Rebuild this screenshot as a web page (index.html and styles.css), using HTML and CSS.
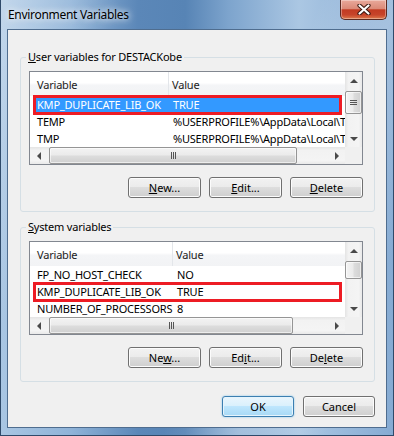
FILE: index.html
```html
<!DOCTYPE html>
<html lang="en">
<head>
  <meta charset="UTF-8" />
  <title>Environment Variables</title>
  <link rel="stylesheet" href="styles.css">
</head>
<body>
  <div class="window">
    <div class="titlebar">
      <span class="title">Environment Variables</span>
      <div class="close">
        <svg width="14" height="11" viewBox="0 0 14 11">
          <path d="M2.5 1.5 L11.5 9.5 M11.5 1.5 L2.5 9.5" stroke="#3b1810" stroke-width="4.2" stroke-linecap="round" fill="none"/>
          <path d="M2.5 1.5 L11.5 9.5 M11.5 1.5 L2.5 9.5" stroke="#fff" stroke-width="2.2" stroke-linecap="round" fill="none"/>
        </svg>
      </div>
    </div>

    <div class="client">
      <!-- user variables -->
      <fieldset class="group">
        <legend><u>U</u>ser variables for DESTACKobe</legend>
        <div class="list list-user">
          <div class="list-body">
            <div class="list-head cols"><span>Variable</span><span>Value</span></div>
            <div class="row cols mark sel"><span>KMP_DUPLICATE_LIB_OK</span><span>TRUE</span></div>
            <div class="row cols"><span>TEMP</span><span>%USERPROFILE%\AppData\Local\T</span></div>
            <div class="row cols"><span>TMP</span><span>%USERPROFILE%\AppData\Local\T</span></div>
          </div>
          <div class="vscroll">
            <div class="sb-btn"><i class="arr-up"></i></div>
            <div class="thumb-v thumb-user"><i class="grip-v"></i></div>
            <div class="sb-fill"></div>
            <div class="sb-btn"><i class="arr-down"></i></div>
          </div>
          <div class="hscroll">
            <div class="sb-btn-h"><i class="arr-left"></i></div>
            <div class="thumb-h" style="width: 248px"><i class="grip-h"></i></div>
            <div class="sb-fill"></div>
            <div class="sb-btn-h"><i class="arr-right"></i></div>
          </div>
          <div class="corner"></div>
        </div>
        <div class="btns">
          <button class="btn"><u>N</u>ew...</button>
          <button class="btn"><u>E</u>dit...</button>
          <button class="btn"><u>D</u>elete</button>
        </div>
      </fieldset>

      <!-- system variables -->
      <fieldset class="group">
        <legend><u>S</u>ystem variables</legend>
        <div class="list list-sys">
          <div class="list-body">
            <div class="list-head cols"><span>Variable</span><span>Value</span></div>
            <div class="row cols"><span>FP_NO_HOST_CHECK</span><span>NO</span></div>
            <div class="row cols mark"><span>KMP_DUPLICATE_LIB_OK</span><span>TRUE</span></div>
            <div class="row cols"><span>NUMBER_OF_PROCESSORS</span><span>8</span></div>
          </div>
          <div class="vscroll">
            <div class="sb-btn"><i class="arr-up"></i></div>
            <div class="thumb-v thumb-sys"></div>
            <div class="sb-fill"></div>
            <div class="sb-btn"><i class="arr-down"></i></div>
          </div>
          <div class="hscroll">
            <div class="sb-btn-h"><i class="arr-left"></i></div>
            <div class="thumb-h" style="width: 244px"><i class="grip-h"></i></div>
            <div class="sb-fill"></div>
            <div class="sb-btn-h"><i class="arr-right"></i></div>
          </div>
          <div class="corner"></div>
        </div>
        <div class="btns">
          <button class="btn">Ne<u>w</u>...</button>
          <button class="btn">Ed<u>i</u>t...</button>
          <button class="btn">De<u>l</u>ete</button>
        </div>
      </fieldset>

      <div class="dlg-btns">
        <button class="btn btn-ok">OK</button>
        <button class="btn">Cancel</button>
      </div>
    </div>
  </div>
</body>
</html>
```

FILE: styles.css
```css
* {
  box-sizing: border-box;
}
body {
  margin: 0;
  font-family: "Noto Sans", sans-serif;
  font-size: 11px;
  letter-spacing: -0.2px;
  color: #000;
  background: #6f94bb;
}
.window {
  width: 394px;
  height: 436px;
  border: 1px solid #2f4a6a;
  border-top: none;
  background:
    linear-gradient(110deg, rgba(255,255,255,0.3) 0%, rgba(255,255,255,0) 22%, rgba(255,255,255,0) 58%, rgba(255,255,255,0.25) 72%, rgba(255,255,255,0) 88%),
    linear-gradient(to right, #a9c6e3 0%, #8fb3d8 18%, #5b87b8 35%, #5784b5 47%, #7da4cd 58%, #abc7e3 76%, #86abd3 100%);
}
.titlebar {
  height: 29px;
  display: flex;
  justify-content: space-between;
  align-items: flex-start;
  padding: 0 6px 0 7px;
}
.title {
  padding-top: 7px;
  font-size: 12px;
  line-height: 16px;
  letter-spacing: -0.3px;
  text-shadow: 0 0 6px #fff, 0 0 10px rgba(255,255,255,0.8);
}
.close {
  width: 47px;
  height: 20px;
  display: flex;
  align-items: center;
  justify-content: center;
  border: 1px solid #5b2a22;
  border-top: none;
  border-radius: 0 0 5px 5px;
  background: linear-gradient(#e9a99b 0%, #db8a78 45%, #c23b22 52%, #c7442a 78%, #dd7a4c 100%);
  box-shadow: inset 0 0 0 1px rgba(255,255,255,0.35);
}
.client {
  margin: 0 6px;
  height: 399px;
  border: 1px solid #4f6d8f;
  background: #f0f0f0;
  padding-top: 20px;
}

/* group boxes */
.group {
  margin: 0 11px 0 12px;
  padding: 0 11px 13px 8px;
  border: 1px solid #d5dfe5;
  border-radius: 3px;
  min-width: 0;
}
.group + .group {
  margin-top: 8px;
}
.group legend {
  font-size: 11px;
  line-height: 14px;
  padding: 0 2px;
  margin-left: -3px;
}

/* list view */
.list {
  margin-top: 7px;
  height: 94px;
  border: 1px solid #828790;
  background: #fff;
  display: grid;
  grid-template-columns: 315px 17px;
  grid-template-rows: 75px 17px;
}
.list-body {
  overflow: hidden;
}
.list-user .cols {
  grid-template-columns: 139px 1fr;
}
.list-sys .cols {
  grid-template-columns: 143px 1fr;
}
.cols {
  display: grid;
  white-space: nowrap;
}
.list-head {
  height: 24px;
  background: linear-gradient(#fff 0%, #fff 45%, #f4f5f7 55%, #f2f3f5 100%);
}
.list-head span {
  display: flex;
  align-items: center;
  padding-left: 3px;
  color: #1b1b1b;
}
.list-head span:first-child {
  padding-left: 7px;
  border-right: 1px solid #e3e6ea;
}
.row {
  height: 17px;
  line-height: 17px;
}
.row span {
  position: relative;
  padding-left: 4px;
}
.row span:first-child {
  padding-left: 7px;
}
.mark {
  position: relative;
}
.mark::before {
  content: "";
  position: absolute;
  left: 3px;
  right: 3px;
  top: -1px;
  bottom: -2px;
  border: 3px solid #ed1c24;
}
.sel {
  color: #fff;
}
.sel::before {
  background: #3399ff;
}

/* scrollbars */
.vscroll {
  display: flex;
  flex-direction: column;
  background: linear-gradient(to right, #e4e4e4, #f2f2f2 20%, #f4f4f4 80%, #e9e9e9);
}
.hscroll {
  display: flex;
  background: linear-gradient(#e4e4e4, #f2f2f2 20%, #f4f4f4 80%, #e9e9e9);
}
.corner {
  background: #f0f0f0;
}
.sb-btn {
  height: 17px;
  flex: none;
  display: flex;
  align-items: center;
  justify-content: center;
}
.sb-btn-h {
  width: 17px;
  flex: none;
  display: flex;
  align-items: center;
  justify-content: center;
}
.sb-fill {
  flex: 1;
}
.arr-up,
.arr-down,
.arr-left,
.arr-right {
  width: 0;
  height: 0;
  border: 4px solid transparent;
}
.arr-up {
  border-top: none;
  border-bottom-color: #4a4a4a;
}
.arr-down {
  border-bottom: none;
  border-top-color: #4a4a4a;
}
.arr-left {
  border-left: none;
  border-right-color: #4a4a4a;
}
.arr-right {
  border-right: none;
  border-left-color: #4a4a4a;
}
.thumb-v {
  flex: none;
  margin-top: 2px;
  display: flex;
  border: 1px solid #959595;
  border-radius: 2px;
  background: linear-gradient(to right, #f3f3f3, #ebebeb 45%, #dcdcdc 55%, #d0d0d0);
  box-shadow: inset 0 0 0 1px rgba(255,255,255,0.6);
}
.thumb-user {
  height: 23px;
}
.thumb-sys {
  height: 18px;
}
.grip-v {
  width: 7px;
  height: 5px;
  margin: auto;
  background: repeating-linear-gradient(#555 0 1px, transparent 1px 2px);
}
.thumb-h {
  flex: none;
  margin-left: 2px;
  display: flex;
  border: 1px solid #959595;
  border-radius: 2px;
  background: linear-gradient(#f3f3f3, #ebebeb 45%, #dcdcdc 55%, #d0d0d0);
  box-shadow: inset 0 0 0 1px rgba(255,255,255,0.6);
}
.grip-h {
  width: 5px;
  height: 7px;
  margin: auto;
  background: repeating-linear-gradient(to right, #555 0 1px, transparent 1px 2px);
}

/* buttons */
.btns {
  display: flex;
  justify-content: flex-end;
  gap: 8px;
  margin-top: 12px;
}
.btn {
  width: 73px;
  height: 21px;
  padding: 0;
  border: 1px solid #707070;
  border-radius: 3px;
  background: linear-gradient(#f2f2f2 0%, #ebebeb 49%, #dddddd 50%, #cfcfcf 100%);
  box-shadow: inset 0 0 0 1px #fcfcfc;
  font: inherit;
  font-size: 11px;
  color: #000;
}
.dlg-btns {
  display: flex;
  justify-content: flex-end;
  gap: 9px;
  margin: 14px 11px 0 0;
}
.dlg-btns .btn {
  width: 72px;
}
.btn-ok {
  border-color: #3c7fb1;
  background: linear-gradient(#eaf6fd 0%, #d9f0fc 49%, #bee6fd 50%, #a7d9f5 100%);
  box-shadow: inset 0 0 0 1px #e6f4fc, 0 0 2px #7ec3ea;
}
```
